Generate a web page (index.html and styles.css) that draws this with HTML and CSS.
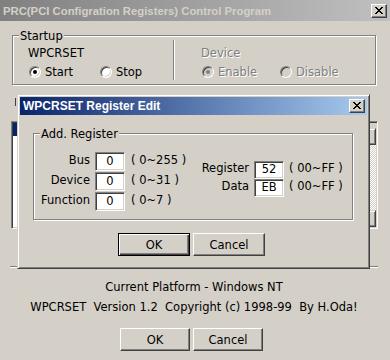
FILE: index.html
```html
<!DOCTYPE html>
<html>
<head>
<meta charset="utf-8">
<title>PRC Control Program</title>
<link rel="stylesheet" href="styles.css">
</head>
<body>
<div class="app">
  <div class="titlebar main-title">
    <span class="title-text">PRC(PCI Configration Registers) Control Program</span>
    <span class="close"><svg width="8" height="7" viewBox="0 0 8 7" shape-rendering="crispEdges"><path d="M0 0h2v1H0zM6 0h2v1H6zM1 1h2v1H1zM5 1h2v1H5zM2 2h4v1H2zM3 3h2v1H3zM2 4h4v1H2zM1 5h2v1H1zM5 5h2v1H5zM0 6h2v1H0zM6 6h2v1H6z" fill="#000"/></svg></span>
  </div>
  <div class="client">
    <div class="group startup">
      <span class="legend">Startup</span>
      <div class="col col-left">
        <div class="caption">WPCRSET</div>
        <div class="options">
          <label class="opt"><span class="radio checked"></span>Start</label>
          <label class="opt"><span class="radio"></span>Stop</label>
        </div>
      </div>
      <div class="vsep"></div>
      <div class="col col-right disabled">
        <div class="caption">Device</div>
        <div class="options">
          <label class="opt"><span class="radio checked"></span>Enable</label>
          <label class="opt"><span class="radio"></span>Disable</label>
        </div>
      </div>
    </div>
    <div class="mark"></div>
    <div class="listbox">
      <div class="list"><div class="item sel"></div></div>
      <div class="vscroll">
        <div class="sb-gap"></div>
        <div class="sb-btn"></div>
        <div class="sb-track"></div>
        <div class="sb-btn"></div>
      </div>
    </div>
    <div class="hsep"></div>
    <p class="info">Current Platform - Windows NT</p>
    <p class="info second">WPCRSET  Version 1.2  Copyright (c) 1998-99  By H.Oda!</p>
    <div class="buttons main-buttons">
      <button class="btn">OK</button>
      <button class="btn">Cancel</button>
    </div>
  </div>

  <div class="dialog">
    <div class="titlebar dlg-title">
      <span class="title-text">WPCRSET Register Edit</span>
      <span class="close"><svg width="8" height="7" viewBox="0 0 8 7" shape-rendering="crispEdges"><path d="M0 0h2v1H0zM6 0h2v1H6zM1 1h2v1H1zM5 1h2v1H5zM2 2h4v1H2zM3 3h2v1H3zM2 4h4v1H2zM1 5h2v1H1zM5 5h2v1H5zM0 6h2v1H0zM6 6h2v1H6z" fill="#000"/></svg></span>
    </div>
    <div class="group reg">
      <span class="legend">Add. Register</span>
      <div class="reg-left">
        <span class="lbl">Bus</span><span class="field">0</span><span class="range">( 0~255 )</span>
        <span class="lbl">Device</span><span class="field">0</span><span class="range">( 0~31 )</span>
        <span class="lbl">Function</span><span class="field">0</span><span class="range">( 0~7 )</span>
      </div>
      <div class="reg-right">
        <span class="lbl">Register</span><span class="field">52</span><span class="range">( 00~FF )</span>
        <span class="lbl">Data</span><span class="field">EB</span><span class="range">( 00~FF )</span>
      </div>
    </div>
    <div class="buttons dlg-buttons">
      <button class="btn wide default">OK</button>
      <button class="btn wide">Cancel</button>
    </div>
  </div>
</div>
</body>
</html>
```
FILE: styles.css
```css
body {
  margin: 0;
  background: #d4d0c8;
  font-family: "DejaVu Sans", sans-serif;
  font-size: 11.5px;
  color: #000;
}

.app {
  position: relative;
  width: 390px;
  height: 360px;
  overflow: hidden;
  background: #d4d0c8;
}

/* title bars */
.titlebar {
  display: flex;
  justify-content: space-between;
  align-items: flex-start;
  overflow: hidden;
  font-family: "Liberation Sans", Arial, sans-serif;
  font-weight: bold;
}
.title-text { white-space: nowrap; }

.main-title {
  height: 21px;
  background: linear-gradient(to right, #808080, #c0c0c0);
  color: #d4d0c8;
}
.main-title .title-text {
  font-size: 11.3px;
  line-height: 19px;
  margin: 2px 0 0 3px;
}
.main-title .close { margin: 4px 3px 0 0; }

.close {
  width: 16px;
  height: 14px;
  box-sizing: border-box;
  background: #d4d0c8;
  border: 1px solid;
  border-color: #fff #404040 #404040 #fff;
  box-shadow: inset -1px -1px #808080;
  display: flex;
  align-items: flex-start;
  padding: 2px 0 0 3px;
}
.close svg { display: block; }

/* client area */
.client {
  display: flex;
  flex-direction: column;
}

.group {
  position: relative;
  box-sizing: border-box;
  border: 1px solid #808080;
  box-shadow: inset 1px 1px #fff, 1px 1px #fff;
}
.legend {
  position: absolute;
  top: -6px;
  left: 6px;
  padding: 0 1px;
  background: #d4d0c8;
  line-height: 13px;
}

.startup {
  margin: 14px 14px 0 12px;
  height: 50px;
  display: flex;
}
.col {
  box-sizing: border-box;
  padding-top: 11px;
}
.col-left {
  width: 160px;
  padding-left: 15px;
}
.col-right {
  flex: 1;
  padding-left: 26px;
}
.vsep {
  width: 1px;
  background: #808080;
  border-right: 1px solid #fff;
  margin: 4px 0;
}
.caption { line-height: 13px; }
.options {
  display: flex;
  margin-top: 5px;
  padding-left: 1px;
}
.opt {
  display: flex;
  align-items: center;
  line-height: 14px;
  width: 71px;
}
.col-right .opt { width: 78px; }
.opt .radio { margin-right: 4px; }

.radio {
  width: 12px;
  height: 12px;
  box-sizing: border-box;
  border-radius: 50%;
  border: 1px solid;
  border-color: #808080 #fff #fff #808080;
  box-shadow: inset 1px 1px #404040, inset -1px -1px #d4d0c8;
  background: #fff;
  display: flex;
  align-items: center;
  justify-content: center;
}
.radio.checked::after {
  content: "";
  width: 4px;
  height: 4px;
  border-radius: 50%;
  background: #000;
}
.disabled { color: #808080; text-shadow: 1px 1px #fff; }
.disabled .radio { background: #d4d0c8; }
.disabled .radio.checked::after { background: #808080; }

.mark {
  width: 1px;
  height: 8px;
  margin: 13px 0 0 15px;
  background: #404040;
}

.listbox {
  margin: 15px 12px 0 11px;
  height: 108px;
  box-sizing: border-box;
  border: 1px solid;
  border-color: #808080 #fff #fff #808080;
  box-shadow: inset 1px 1px #404040, inset -1px -1px #d4d0c8;
  padding: 1px;
  display: flex;
  background: #fff;
}
.list { flex: 1; }
.item { height: 13px; }
.item.sel { background: #0a246a; }
.vscroll {
  width: 16px;
  display: flex;
  flex-direction: column;
}
.sb-gap { height: 5px; background: #d4d0c8; }
.sb-btn {
  height: 17px;
  box-sizing: border-box;
  background: #d4d0c8;
  border: 1px solid;
  border-color: #d4d0c8 #404040 #404040 #d4d0c8;
  box-shadow: inset 1px 1px #fff, inset -1px -1px #808080;
}
.sb-track {
  flex: 1;
  background: repeating-conic-gradient(#fff 0 25%, #d4d0c8 0 50%) 0 0 / 2px 2px;
}

.hsep {
  border-top: 1px solid #808080;
  border-bottom: 1px solid #fff;
  margin: 37px 12px 0 10px;
}

.info {
  margin: 13px 2px 0 0;
  text-align: center;
  line-height: 13px;
}
.info.second {
  margin-top: 7px;
  white-space: pre;
}

.buttons {
  display: flex;
  justify-content: center;
  gap: 3px;
}
.main-buttons {
  margin-top: 14px;
  padding-right: 7px;
}
.btn {
  width: 70px;
  height: 23px;
  box-sizing: border-box;
  padding: 0;
  font: inherit;
  color: #000;
  background: #d4d0c8;
  border: 1px solid;
  border-color: #fff #404040 #404040 #fff;
  box-shadow: inset -1px -1px #808080;
}
.btn.wide { width: 72px; }
.btn.default {
  border: 1px solid #000;
  box-shadow: inset 1px 1px #fff, inset -1px -1px #404040, inset -2px -2px #808080;
}

/* dialog */
.dialog {
  position: absolute;
  left: 17px;
  top: 94px;
  width: 353px;
  height: 175px;
  box-sizing: border-box;
  border: 1px solid;
  border-color: #d4d0c8 #404040 #404040 #d4d0c8;
  box-shadow: inset 1px 1px #fff, inset -1px -1px #808080;
  padding: 2px;
  background: #d4d0c8;
  display: flex;
  flex-direction: column;
}
.dlg-title {
  height: 18px;
  flex: none;
  background: linear-gradient(to right, #0a246a, #a6caf0);
  color: #fff;
}
.dlg-title .title-text {
  font-size: 12px;
  line-height: 17px;
  margin: 1px 0 0 3px;
}
.dlg-title .close { margin: 2px 2px 0 0; }

.reg {
  margin: 18px 14px 0 13px;
  height: 87px;
  flex: none;
  display: flex;
}
.reg-left {
  width: 166px;
  box-sizing: border-box;
  padding-top: 18px;
  display: grid;
  grid-template-columns: 56px 30px auto;
  grid-auto-rows: 19px;
  column-gap: 5px;
  row-gap: 1px;
  align-content: start;
}
.reg-right {
  padding-top: 27px;
  display: grid;
  grid-template-columns: 49px 30px auto;
  grid-auto-rows: 18px;
  column-gap: 5px;
  align-content: start;
}
.lbl {
  text-align: right;
  line-height: 17px;
  white-space: nowrap;
}
.reg-right .lbl { line-height: 15px; }
.range {
  margin-left: 1px;
  line-height: 17px;
  white-space: pre;
}
.reg-right .range { margin-left: 0; line-height: 15px; }
.field {
  box-sizing: border-box;
  border: 1px solid;
  border-color: #808080 #fff #fff #808080;
  box-shadow: inset 1px 1px #404040, inset -1px -1px #d4d0c8;
  background: #fff;
  text-align: center;
  line-height: 15px;
  padding-top: 1px;
}
.reg-right .field {
  padding-top: 0;
  line-height: 14px;
}

.dlg-buttons {
  margin-top: 13px;
  padding-right: 4px;
}
```
